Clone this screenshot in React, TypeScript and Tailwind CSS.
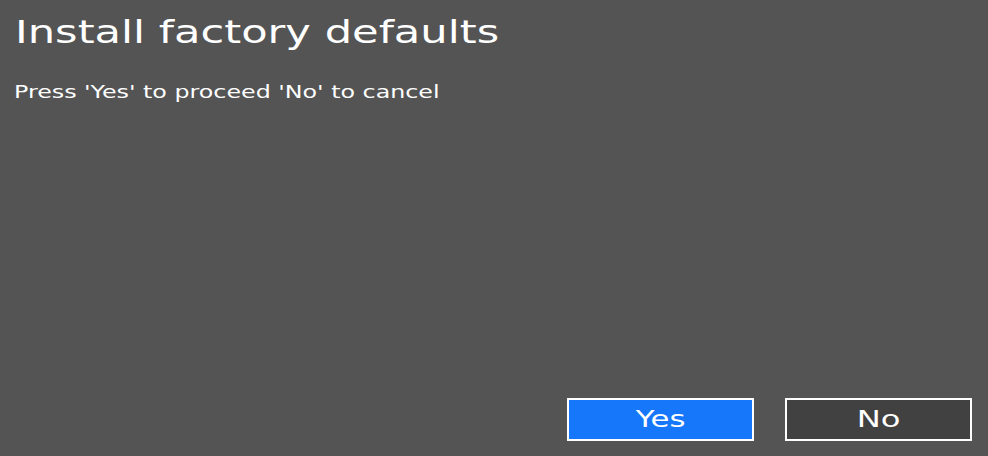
export default function App() {
  return (
    <div
      className="w-[988px] h-[456px] bg-[#545454] flex flex-col text-white overflow-hidden"
      style={{ fontFamily: '"DejaVu Sans", sans-serif' }}
    >
      <div className="pl-[15px] pt-[12px] text-[32px] leading-[40px]">
        <span className="inline-block origin-left scale-x-[1.35]">Install factory defaults</span>
      </div>
      <div className="pl-[14px] pt-[29px] text-[18px] leading-[22px]">
        <span className="inline-block origin-left scale-x-[1.32]">Press 'Yes' to proceed 'No' to cancel</span>
      </div>
      <div className="flex-1" />
      <div className="flex justify-end gap-[31px] pr-[16px] pb-[15px]">
        <button className="w-[187px] h-[43px] border-2 border-white bg-[#1677fb] text-[23px] flex items-center justify-center">
          <span className="inline-block scale-x-[1.34]">Yes</span>
        </button>
        <button className="w-[187px] h-[43px] border-2 border-white bg-[#414141] text-[23px] flex items-center justify-center">
          <span className="inline-block scale-x-[1.4]">No</span>
        </button>
      </div>
    </div>
  );
}
